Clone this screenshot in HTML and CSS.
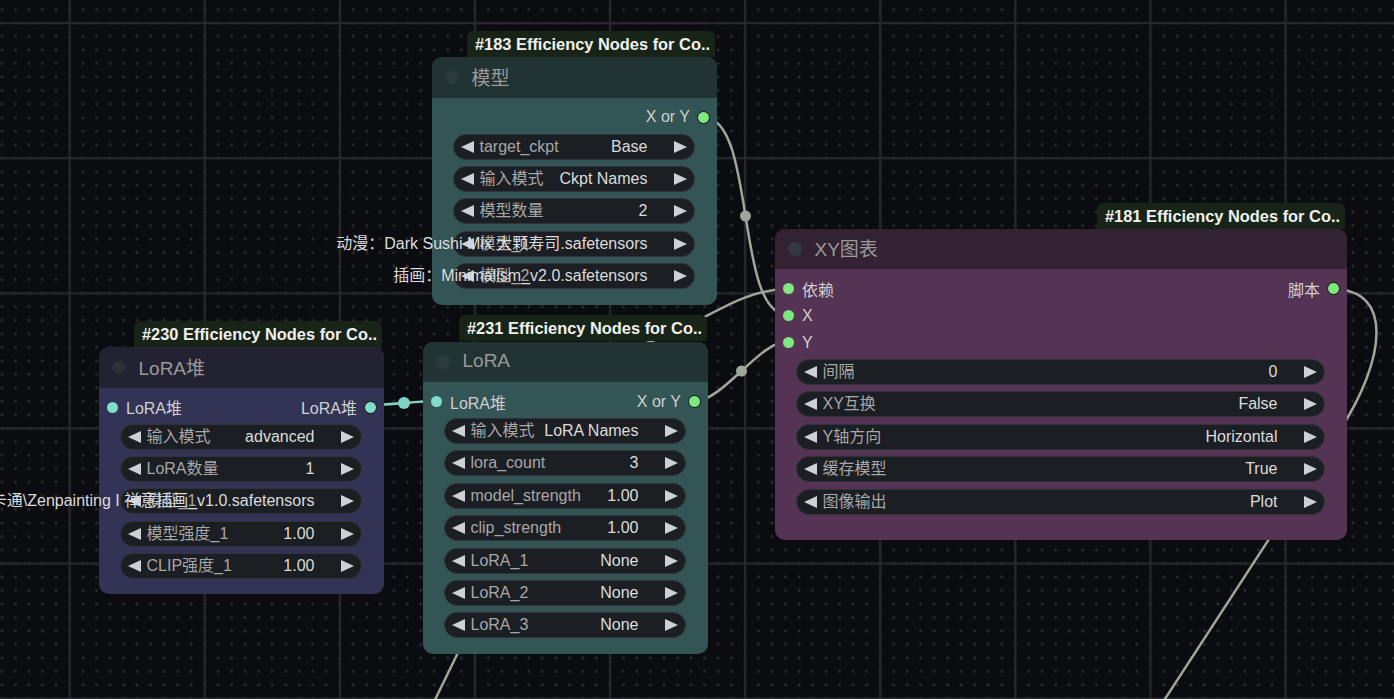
FILE: index.html
```html
<!DOCTYPE html>
<html lang="zh">
<head>
<meta charset="utf-8">
<title>ComfyUI canvas</title>
<link rel="stylesheet" href="styles.css">
</head>
<body>
<div class="canvas">
  <svg class="bg" width="1394" height="699" viewBox="0 0 1394 699">
    <defs>
      <pattern id="minor" patternUnits="userSpaceOnUse" x="62.75" y="16.25" width="13.51" height="13.51">
        <rect x="5.25" y="6.25" width="3" height="1" fill="#34363b"/>
        <rect x="6.25" y="5.25" width="1" height="3" fill="#34363b"/>
      </pattern>
      <pattern id="major" patternUnits="userSpaceOnUse" x="2" y="-44.5" width="135.1" height="135.1">
        <rect x="66.55" y="0" width="2.2" height="135.1" fill="#26282d"/>
        <rect x="0" y="66.55" width="135.1" height="2.2" fill="#26282d"/>
      </pattern>
    </defs>
    <rect width="1394" height="699" fill="url(#minor)"/>
    <rect width="1394" height="699" fill="url(#major)"/>
  </svg>

  <svg class="links" width="1394" height="699" viewBox="0 0 1394 699">
    <g class="wire">
      <path d="M703,117 C757,117 734,315 788,315"/>
      <path d="M695,401 C723,401 760,341 788,341"/>
      <path d="M640,345 C700,328 735,289 788,289"/>
      <path d="M1332,289 C1395,289 1385,360 1340,430 L1150,722"/>
      <path d="M470,628 L432,706"/>
    </g>
    <path class="wire-mint" d="M371,405 C390,405 418,401 437,401"/>
    <circle class="mid" cx="745.5" cy="216" r="5.5"/>
    <circle class="mid" cx="741.5" cy="371" r="5.5"/>
    <circle class="mid-mint" cx="404" cy="403" r="6"/>
  </svg>

  <!-- #183 模型 -->
  <div class="tag t183">#183 Efficiency Nodes for Co..</div>
  <div class="node cyan n183">
    <div class="node-title"><span class="tdot"></span><span class="tname">模型</span></div>
    <div class="node-body">
      <div class="slots">
        <div class="slot-row"><span></span><span class="out">X or Y<i class="dot out-dot green"></i></span></div>
      </div>
      <div class="widgets">
        <div class="w"><i class="al"></i><div class="mid-area"><span class="lbl">target_ckpt</span><span class="val">Base</span></div><i class="ar"></i></div>
        <div class="w"><i class="al"></i><div class="mid-area"><span class="lbl">输入模式</span><span class="val">Ckpt Names</span></div><i class="ar"></i></div>
        <div class="w"><i class="al"></i><div class="mid-area"><span class="lbl">模型数量</span><span class="val">2</span></div><i class="ar"></i></div>
        <div class="w"><i class="al"></i><div class="mid-area"><span class="lbl">模型_1</span><span class="val">动漫：Dark Sushi Mix 大颗寿司.safetensors</span></div><i class="ar"></i></div>
        <div class="w"><i class="al"></i><div class="mid-area"><span class="lbl">模型_2</span><span class="val">插画：Minimalism_v2.0.safetensors</span></div><i class="ar"></i></div>
      </div>
    </div>
  </div>

  <!-- #230 LoRA堆 -->
  <div class="tag t230">#230 Efficiency Nodes for Co..</div>
  <div class="node blue n230">
    <div class="node-title"><span class="tdot"></span><span class="tname">LoRA堆</span></div>
    <div class="node-body">
      <div class="slots">
        <div class="slot-row"><span class="in"><i class="dot mint"></i>LoRA堆</span><span class="out">LoRA堆<i class="dot out-dot mint"></i></span></div>
      </div>
      <div class="widgets">
        <div class="w"><i class="al"></i><div class="mid-area"><span class="lbl">输入模式</span><span class="val">advanced</span></div><i class="ar"></i></div>
        <div class="w"><i class="al"></i><div class="mid-area"><span class="lbl">LoRA数量</span><span class="val">1</span></div><i class="ar"></i></div>
        <div class="w"><i class="al"></i><div class="mid-area"><span class="lbl">模型_1</span><span class="val">卡通\Zenpainting I 禅意插画_v1.0.safetensors</span></div><i class="ar"></i></div>
        <div class="w"><i class="al"></i><div class="mid-area"><span class="lbl">模型强度_1</span><span class="val">1.00</span></div><i class="ar"></i></div>
        <div class="w"><i class="al"></i><div class="mid-area"><span class="lbl">CLIP强度_1</span><span class="val">1.00</span></div><i class="ar"></i></div>
      </div>
    </div>
  </div>

  <!-- #231 LoRA -->
  <div class="tag t231">#231 Efficiency Nodes for Co..</div>
  <div class="node cyan n231">
    <div class="node-title"><span class="tdot"></span><span class="tname">LoRA</span></div>
    <div class="node-body">
      <div class="slots">
        <div class="slot-row"><span class="in"><i class="dot mint"></i>LoRA堆</span><span class="out">X or Y<i class="dot out-dot green"></i></span></div>
      </div>
      <div class="widgets">
        <div class="w"><i class="al"></i><div class="mid-area"><span class="lbl">输入模式</span><span class="val">LoRA Names</span></div><i class="ar"></i></div>
        <div class="w"><i class="al"></i><div class="mid-area"><span class="lbl">lora_count</span><span class="val">3</span></div><i class="ar"></i></div>
        <div class="w"><i class="al"></i><div class="mid-area"><span class="lbl">model_strength</span><span class="val">1.00</span></div><i class="ar"></i></div>
        <div class="w"><i class="al"></i><div class="mid-area"><span class="lbl">clip_strength</span><span class="val">1.00</span></div><i class="ar"></i></div>
        <div class="w"><i class="al"></i><div class="mid-area"><span class="lbl">LoRA_1</span><span class="val">None</span></div><i class="ar"></i></div>
        <div class="w"><i class="al"></i><div class="mid-area"><span class="lbl">LoRA_2</span><span class="val">None</span></div><i class="ar"></i></div>
        <div class="w"><i class="al"></i><div class="mid-area"><span class="lbl">LoRA_3</span><span class="val">None</span></div><i class="ar"></i></div>
      </div>
    </div>
  </div>

  <!-- #181 XY图表 -->
  <div class="tag txy">#181 Efficiency Nodes for Co..</div>
  <div class="node purple nxy">
    <div class="node-title"><span class="tdot"></span><span class="tname">XY图表</span></div>
    <div class="node-body">
      <div class="slots">
        <div class="slot-row"><span class="in"><i class="dot green"></i>依赖</span><span class="out">脚本<i class="dot out-dot green"></i></span></div>
        <div class="slot-row"><span class="in"><i class="dot green"></i>X</span></div>
        <div class="slot-row"><span class="in"><i class="dot green"></i>Y</span></div>
      </div>
      <div class="widgets">
        <div class="w"><i class="al"></i><div class="mid-area"><span class="lbl">间隔</span><span class="val">0</span></div><i class="ar"></i></div>
        <div class="w"><i class="al"></i><div class="mid-area"><span class="lbl">XY互换</span><span class="val">False</span></div><i class="ar"></i></div>
        <div class="w"><i class="al"></i><div class="mid-area"><span class="lbl">Y轴方向</span><span class="val">Horizontal</span></div><i class="ar"></i></div>
        <div class="w"><i class="al"></i><div class="mid-area"><span class="lbl">缓存模型</span><span class="val">True</span></div><i class="ar"></i></div>
        <div class="w"><i class="al"></i><div class="mid-area"><span class="lbl">图像输出</span><span class="val">Plot</span></div><i class="ar"></i></div>
      </div>
    </div>
  </div>
</div>
</body>
</html>
```

FILE: styles.css
```css
* { box-sizing: border-box; }

body {
  margin: 0;
  background: #0b0c0f;
  font-family: "Liberation Sans", "Noto Sans CJK SC", sans-serif;
}

.canvas {
  position: relative;
  width: 1394px;
  height: 699px;
  overflow: hidden;
  background: #0b0c0f;
}

.bg, .links {
  position: absolute;
  left: 0;
  top: 0;
}

.wire path {
  fill: none;
  stroke: #9ea79b;
  stroke-width: 2.5;
}

.wire-mint {
  fill: none;
  stroke: #7fd3c5;
  stroke-width: 2.5;
}

.mid { fill: #9ea79b; }
.mid-mint { fill: #7fd3c5; }

/* node id badge above each node */
.tag {
  position: absolute;
  width: 248px;
  height: 26px;
  padding-left: 8px;
  background: #172417;
  border-radius: 6px 6px 0 0;
  color: #f0f0f0;
  font-size: 16.4px;
  font-weight: bold;
  line-height: 26px;
  white-space: nowrap;
}

.t183 { left: 467px; top: 30.5px; }
.t230 { left: 134px; top: 321px; }
.t231 { left: 459px; top: 315px; }
.txy  { left: 1097px; top: 202.5px; }

/* nodes */
.node {
  position: absolute;
  display: flex;
  flex-direction: column;
  border-radius: 10px;
}

.n183 { left: 432px; top: 57px; width: 285px; height: 248px; }
.n230 { left: 99px; top: 347px; width: 285px; height: 247px; }
.n231 { left: 423px; top: 341.5px; width: 285px; height: 312px; }
.nxy  { left: 775px; top: 228.5px; width: 572px; height: 311px; }

.cyan   { background: #335555; }
.cyan .node-title { background: #223333; }
.cyan .tdot { background: #2b3a3a; }

.blue   { background: #333355; }
.blue .node-title { background: #222233; }
.blue .tdot { background: #2f3035; }

.purple { background: #553355; }
.purple .node-title { background: #332233; }
.purple .tdot { background: #333841; }

.node-title {
  height: 40.5px;
  display: flex;
  align-items: center;
  gap: 13px;
  padding-left: 13px;
  border-radius: 10px 10px 0 0;
  flex: none;
}

.tdot {
  width: 13.5px;
  height: 13.5px;
  border-radius: 50%;
  flex: none;
}

.tname {
  font-size: 19px;
  color: #9a9a9a;
  white-space: nowrap;
  margin-top: -2px;
}

.node-body {
  flex: 1;
  display: flex;
  flex-direction: column;
  padding: 6px 22.5px 0 21px;
}

.slots {
  margin: 0 -22.5px 0 -21px;
  display: flex;
  flex-direction: column;
}

.slot-row {
  height: 27px;
  display: flex;
  align-items: center;
  justify-content: space-between;
  padding: 0 7px 0 8px;
  font-size: 16px;
  color: #d0d0d0;
  white-space: nowrap;
}

.in, .out {
  display: flex;
  align-items: center;
}

.in { gap: 8px; }
.out { gap: 7px; }

.dot {
  display: block;
  width: 11px;
  height: 11px;
  border-radius: 50%;
}

.out-dot {
  width: 13px;
  height: 13px;
  border: 1.5px solid #111;
}

.green { background: #7ee87e; }
.mint { background: #80dccd; }

.widgets {
  display: flex;
  flex-direction: column;
  gap: 6.4px;
  margin-top: 3px;
}

.w {
  height: 26px;
  border-radius: 13px;
  background: #1b1e23;
  border: 1px solid #30343a;
  display: flex;
  align-items: center;
  padding: 0 7px;
  font-size: 16px;
  white-space: nowrap;
}

.al, .ar {
  display: block;
  flex: none;
  width: 0;
  height: 0;
  border-top: 6.75px solid transparent;
  border-bottom: 6.75px solid transparent;
}

.al { border-right: 13.5px solid #cdd0d6; }
.ar { border-left: 13.5px solid #cdd0d6; }

.mid-area {
  flex: 1;
  min-width: 0;
  display: grid;
  grid-template-columns: minmax(0, 1fr);
  margin: 0 26px 0 5.5px;
}

.lbl, .val {
  grid-area: 1 / 1;
  line-height: 18px;
}

.lbl {
  justify-self: start;
  color: #a8a8a8;
}

.val {
  justify-self: end;
  color: #dcdcdc;
}
```
